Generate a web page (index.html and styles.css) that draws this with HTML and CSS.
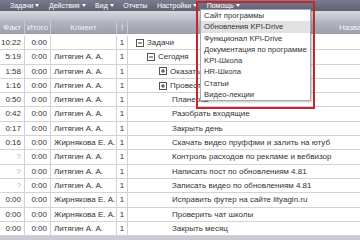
FILE: index.html
```html
<!DOCTYPE html>
<html lang="ru">
<head>
  <meta charset="UTF-8" />
  <title>Задачи</title>
  <link rel="stylesheet" href="styles.css">
</head>
<body>
  <div class="app">
    <div class="menubar">
      <span class="menu-item">Задачи <i class="caret"></i></span>
      <span class="menu-item">Действия <i class="caret"></i></span>
      <span class="menu-item">Вид <i class="caret"></i></span>
      <span class="menu-item">Отчеты</span>
      <span class="menu-item">Настройки <i class="caret"></i></span>
      <span class="menu-item">Помощь <i class="caret"></i></span>
      <div class="dropdown">
        <div class="dd-item">Сайт программы</div>
        <div class="dd-item active">Обновления KPI-Drive</div>
        <div class="dd-item">Функционал KPI-Drive</div>
        <div class="dd-item">Документация по программе</div>
        <div class="dd-item">KPI-Школа</div>
        <div class="dd-item">HR-Школа</div>
        <div class="dd-item">Статьи</div>
        <div class="dd-item">Видео-лекции</div>
      </div>
      <div class="highlight"></div>
    </div>
    <div class="toolbar"></div>

    <div class="row head">
      <div class="cell">Факт</div>
      <div class="cell">Итого</div>
      <div class="cell">Клиент</div>
      <div class="cell">!</div>
      <div class="cell name">Название</div>
    </div>

    <div class="grid">
      <div class="row">
        <div class="cell num">10:22</div><div class="cell num">0:00</div><div class="cell client"></div><div class="cell prio">1</div>
        <div class="cell title lvl0"><svg class="tog" width="8" height="8"><rect x=".5" y=".5" width="7" height="7" fill="#fff" stroke="#555"/><path d="M2 4h4" stroke="#333"/></svg>Задачи</div>
      </div>
      <div class="row">
        <div class="cell num">5:19</div><div class="cell num">0:00</div><div class="cell client">Литягин А. А.</div><div class="cell prio">1</div>
        <div class="cell title lvl1"><svg class="tog" width="8" height="8"><rect x=".5" y=".5" width="7" height="7" fill="#fff" stroke="#555"/><path d="M2 4h4" stroke="#333"/></svg>Сегодня</div>
      </div>
      <div class="row">
        <div class="cell num">1:58</div><div class="cell num">0:00</div><div class="cell client">Литягин А. А.</div><div class="cell prio">1</div>
        <div class="cell title lvl2"><svg class="tog" width="8" height="8"><rect x=".5" y=".5" width="7" height="7" fill="#fff" stroke="#555"/><path d="M2 4h4M4 2v4" stroke="#333"/></svg>Оказать консультацию</div>
      </div>
      <div class="row">
        <div class="cell num">1:16</div><div class="cell num">0:00</div><div class="cell client">Литягин А. А.</div><div class="cell prio">1</div>
        <div class="cell title lvl2"><svg class="tog" width="8" height="8"><rect x=".5" y=".5" width="7" height="7" fill="#fff" stroke="#555"/><path d="M2 4h4M4 2v4" stroke="#333"/></svg>Провести консультацию с клиентом</div>
      </div>
      <div class="row">
        <div class="cell num">0:50</div><div class="cell num">0:00</div><div class="cell client">Литягин А. А.</div><div class="cell prio">1</div>
        <div class="cell title leaf">Планерка</div>
      </div>
      <div class="row">
        <div class="cell num">0:42</div><div class="cell num">0:00</div><div class="cell client">Литягин А. А.</div><div class="cell prio">1</div>
        <div class="cell title leaf">Разобрать входящие</div>
      </div>
      <div class="row">
        <div class="cell num">0:17</div><div class="cell num">0:00</div><div class="cell client">Литягин А. А.</div><div class="cell prio">1</div>
        <div class="cell title leaf">Закрыть день</div>
      </div>
      <div class="row">
        <div class="cell num">0:16</div><div class="cell num">0:00</div><div class="cell client">Жирнякова Е. А.</div><div class="cell prio">1</div>
        <div class="cell title leaf">Скачать видео пруффми и залить на ютуб</div>
      </div>
      <div class="row">
        <div class="cell num muted">?</div><div class="cell num">0:00</div><div class="cell client">Литягин А. А.</div><div class="cell prio">1</div>
        <div class="cell title leaf">Контроль расходов по рекламе и вебвизор</div>
      </div>
      <div class="row">
        <div class="cell num muted">?</div><div class="cell num">0:00</div><div class="cell client">Литягин А. А.</div><div class="cell prio">1</div>
        <div class="cell title leaf">Написать пост по обновлениям 4.81</div>
      </div>
      <div class="row">
        <div class="cell num muted">?</div><div class="cell num">0:00</div><div class="cell client">Литягин А. А.</div><div class="cell prio">1</div>
        <div class="cell title leaf">Записать видео по обновлениям 4.81</div>
      </div>
      <div class="row">
        <div class="cell num">0:00</div><div class="cell num">0:00</div><div class="cell client">Жирнякова Е. А.</div><div class="cell prio">1</div>
        <div class="cell title leaf">Исправить футер на сайте lityagin.ru</div>
      </div>
      <div class="row">
        <div class="cell num">0:00</div><div class="cell num">0:00</div><div class="cell client">Жирнякова Е. А.</div><div class="cell prio">1</div>
        <div class="cell title leaf">Проверить чат школы</div>
      </div>
      <div class="row">
        <div class="cell num">0:00</div><div class="cell num">0:00</div><div class="cell client">Литягин А. А.</div><div class="cell prio">1</div>
        <div class="cell title leaf">Закрыть месяц</div>
      </div>
    </div>
    <div class="statusbar"></div>
  </div>
</body>
</html>
```

FILE: styles.css
```css
html, body {
  margin: 0;
  padding: 0;
  height: 100%;
  overflow: hidden;
  font-family: "Liberation Sans", Arial, sans-serif;
  font-size: 8px;
  color: #333;
  background: #fff;
}

.app {
  height: 100%;
  display: flex;
  flex-direction: column;
}

.menubar {
  position: relative;
  height: 11px;
  flex: none;
  display: flex;
  align-items: center;
  gap: 9.5px;
  padding-left: 10px;
  background: linear-gradient(#7b7d8d, #5f6173);
  color: #fff;
  font-size: 7px;
}

.menu-item {
  white-space: nowrap;
}

.caret {
  display: inline-block;
  width: 0;
  height: 0;
  vertical-align: 1px;
  border-top: 3px solid #fff;
  border-left: 2.5px solid transparent;
  border-right: 2.5px solid transparent;
}

.dropdown {
  position: absolute;
  left: 200px;
  top: 9px;
  width: 111px;
  box-sizing: border-box;
  padding: 0;
  background: #fff;
  border: 1px solid #a8a8b0;
  box-shadow: 1px 1px 2px rgba(0,0,0,0.25);
  color: #333;
  font-size: 7.7px;
  z-index: 2;
}

.dd-item {
  height: 11.3px;
  line-height: 11.3px;
  padding-left: 3px;
  white-space: nowrap;
}

.dd-item.active {
  background: #e2e2e2;
}

.highlight {
  position: absolute;
  left: 196px;
  top: 1px;
  width: 119px;
  height: 108px;
  box-sizing: border-box;
  border: 2px solid #c3262d;
  z-index: 3;
}

.toolbar {
  height: 10px;
  flex: none;
  background: linear-gradient(#d6d7de, #b9bbc6);
}

.grid {
  flex: none;
  padding-top: 2px;
}

.row {
  display: grid;
  grid-template-columns: 25px 26px 66px 11px 1fr;
  height: 14.3px;
  box-sizing: border-box;
  border-bottom: 1px solid #d2d2d7;
}

.cell {
  border-right: 1px solid #d2d2d7;
  white-space: nowrap;
  overflow: hidden;
  line-height: 13.3px;
}

.row.head {
  flex: none;
  height: 13px;
  background: linear-gradient(#b4b6c2, #9c9eac);
  color: #f4f4f8;
  border-bottom: none;
}

.row.head .cell {
  text-align: center;
  line-height: 13px;
  border-right: 1px solid #c6c8d2;
}

.row.head .name {
  text-align: left;
  padding-left: 211px;
  border-right: none;
}

.num {
  text-align: right;
  padding-right: 3px;
}

.muted {
  color: #b0b0b0;
}

.client {
  padding-left: 3px;
}

.prio {
  text-align: center;
}

.title {
  display: flex;
  align-items: center;
  border-right: none;
}

.tog {
  flex: none;
  margin-right: 3px;
}

.lvl0 { padding-left: 8px; }
.lvl1 { padding-left: 19px; }
.lvl2 { padding-left: 31px; }
.leaf { padding-left: 44px; }

.statusbar {
  flex: 1;
  background: #c9cad2;
}
```
